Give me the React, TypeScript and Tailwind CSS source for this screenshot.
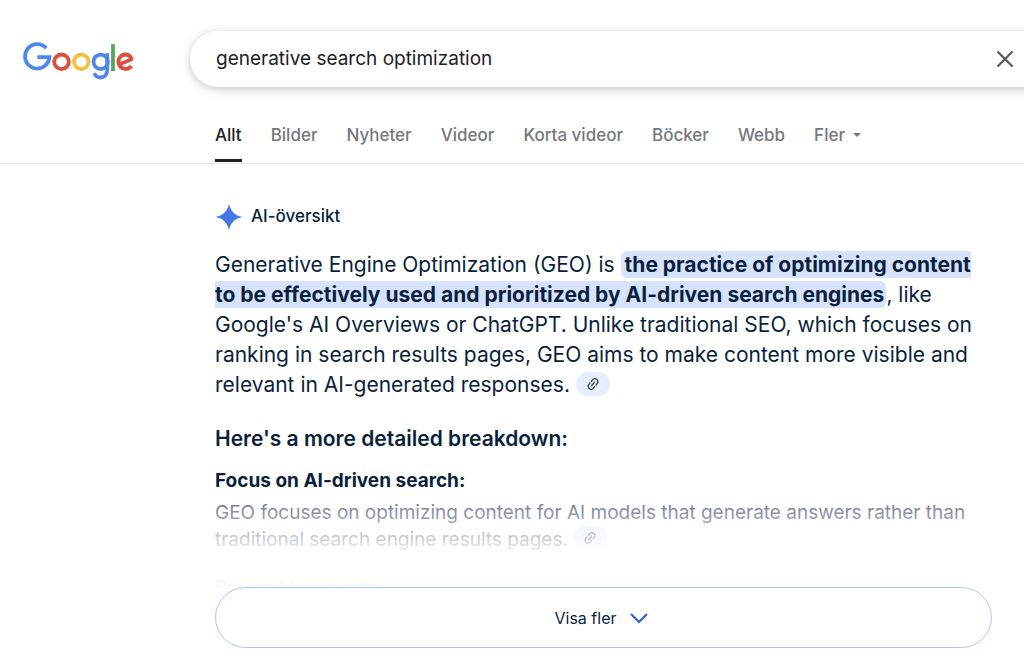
import React, { useState } from "react";

type Tab = {
  id: number;
  label: string;
};

const tabs: Tab[] = [
  { id: 1, label: "Allt" },
  { id: 2, label: "Bilder" },
  { id: 3, label: "Nyheter" },
  { id: 4, label: "Videor" },
  { id: 5, label: "Korta videor" },
  { id: 6, label: "Böcker" },
  { id: 7, label: "Webb" },
];

const Logo = () => (
  <svg width="112" height="38" viewBox="0 0 112 38" fill="none" strokeWidth="3.8" role="img" aria-label="Google">
    <path d="M24.2 6.1A12.2 12.2 0 1 0 27.4 15.2H15.4" stroke="#4f86ec" />
    <circle cx="39.5" cy="19.8" r="7.3" stroke="#d9503f" />
    <circle cx="59.3" cy="19.8" r="7.3" stroke="#f2bf42" />
    <circle cx="78.7" cy="19.8" r="7.2" stroke="#4f86ec" />
    <path d="M85.2 11.2V28c0 4.8-2.8 7.5-6.7 7.5-2.9 0-5.2-1.6-6.3-4.4" stroke="#4f86ec" />
    <path d="M91 2.2V29" stroke="#58a55c" />
    <path d="M96.6 22.7 109.6 17.2C108.4 14 106 12.5 103.3 12.5A7.2 7.2 0 1 0 109.4 24" stroke="#d9503f" strokeLinejoin="bevel" />
  </svg>
);

const SourceLink = () => (
  <button
    aria-label="Visa källa"
    className="inline-flex h-6 w-[34px] items-center justify-center rounded-full bg-[#e5edff] align-[1px]"
  >
    <svg width="14" height="14" viewBox="0 0 24 24" fill="none" stroke="#3c4043" strokeWidth="2.2" strokeLinecap="round">
      <g transform="rotate(-50 12 12)">
        <path d="M10 17H7A5 5 0 0 1 7 7h3M14 7h3a5 5 0 0 1 0 10h-3M8 12h8" />
      </g>
    </svg>
  </button>
);

const App = () => {
  const [query, setQuery] = useState("generative search optimization");
  const [activeTab, setActiveTab] = useState(1);

  return (
    <div className="overflow-hidden bg-white font-['Inter',sans-serif] text-[#0a1f3c]">
      <header className="border-b border-[#e3e5e8]">
        <div className="flex items-center pt-[31px]">
          <a href="#" className="w-[190px] shrink-0 pt-1 pl-[22px]">
            <Logo />
          </a>
          <form
            className="-mr-8 flex h-14 grow items-center rounded-full bg-white pr-[42px] pl-[26px] shadow-[0_2px_10px_rgba(60,64,67,0.3)]"
            onSubmit={(e) => e.preventDefault()}
          >
            <input
              aria-label="Sök"
              className="min-w-0 grow text-[19px] text-[#202124] outline-none"
              value={query}
              onChange={(e) => setQuery(e.target.value)}
            />
            <button type="button" aria-label="Rensa" onClick={() => setQuery("")}>
              <svg width="18" height="18" viewBox="0 0 18 18" stroke="#55585c" strokeWidth="2.2">
                <path d="M1.5 1.5l15 15M16.5 1.5l-15 15" />
              </svg>
            </button>
          </form>
        </div>
        <nav className="flex gap-[29px] pt-9 pb-px pl-[215px] text-[17px] font-medium text-[#75787c]">
          {tabs.map((tab) => (
            <button
              key={tab.id}
              onClick={() => setActiveTab(tab.id)}
              className={`h-[39px] border-b-3 pb-3 leading-6 whitespace-nowrap ${
                activeTab === tab.id ? "border-[#202124] text-[#202124]" : "border-transparent"
              }`}
            >
              {tab.label}
            </button>
          ))}
          <button className="flex h-[39px] items-center gap-2 border-b-3 border-transparent pb-3 leading-6">
            Fler
            <svg width="8" height="4" viewBox="0 0 8 4" fill="#75787c">
              <path d="M0 0h8L4 4z" />
            </svg>
          </button>
        </nav>
      </header>

      <main className="mr-8 ml-[215px] pt-[39px] pb-4">
        <div className="flex items-center gap-2">
          <svg width="28" height="28" viewBox="0 0 28 28" fill="#4478e8">
            <path d="M14 0.5C15.3 8 20 12.7 27.5 14 20 15.3 15.3 20 14 27.5 12.7 20 8 15.3 0.5 14 8 12.7 12.7 8 14 0.5Z" />
          </svg>
          <h1 className="text-[17px] font-medium">AI-översikt</h1>
        </div>

        <p className="mt-[19px] text-[21px] leading-[30px] whitespace-nowrap">
          Generative Engine Optimization (GEO) is{" "}
          <mark className="rounded-md bg-[#d7e2fd] py-px pr-0.5 pl-1 font-bold text-inherit">
            the practice of optimizing content
            <br />
            to be effectively used and prioritized by AI-driven search engines
          </mark>
          , like
          <br />
          Google's AI Overviews or ChatGPT. Unlike traditional SEO, which focuses on
          <br />
          ranking in search results pages, GEO aims to make content more visible and
          <br />
          relevant in AI-generated responses. <SourceLink />
        </p>

        <h2 className="mt-6 text-[21px] leading-[30px] font-semibold">Here's a more detailed breakdown:</h2>

        <div className="relative mt-3 h-[121px] overflow-hidden">
          <h3 className="text-[19px] leading-[30px] font-bold">Focus on AI-driven search:</h3>
          <p className="mt-[3px] text-[19px] leading-[27px] whitespace-nowrap text-[#545d7e]">
            GEO focuses on optimizing content for AI models that generate answers rather than
            <br />
            traditional search engine results pages. <SourceLink />
          </p>
          <h3 className="mt-5 text-[19px] leading-[30px] font-semibold">Beyond keywords:</h3>
          <div className="pointer-events-none absolute inset-x-0 top-6 bottom-0 bg-linear-to-b from-white/0 via-white/90 via-65% to-white/97" />
        </div>

        <button className="flex h-[61px] w-full items-center justify-center gap-3 rounded-full border border-[#a8c7fa] pr-1 text-[16px]">
          Visa fler
          <svg width="20" height="20" viewBox="0 0 20 20" fill="none" stroke="#2f63dc" strokeWidth="2.2">
            <path d="M2 6l8 8 8-8" />
          </svg>
        </button>
      </main>
    </div>
  );
};

export default App;
